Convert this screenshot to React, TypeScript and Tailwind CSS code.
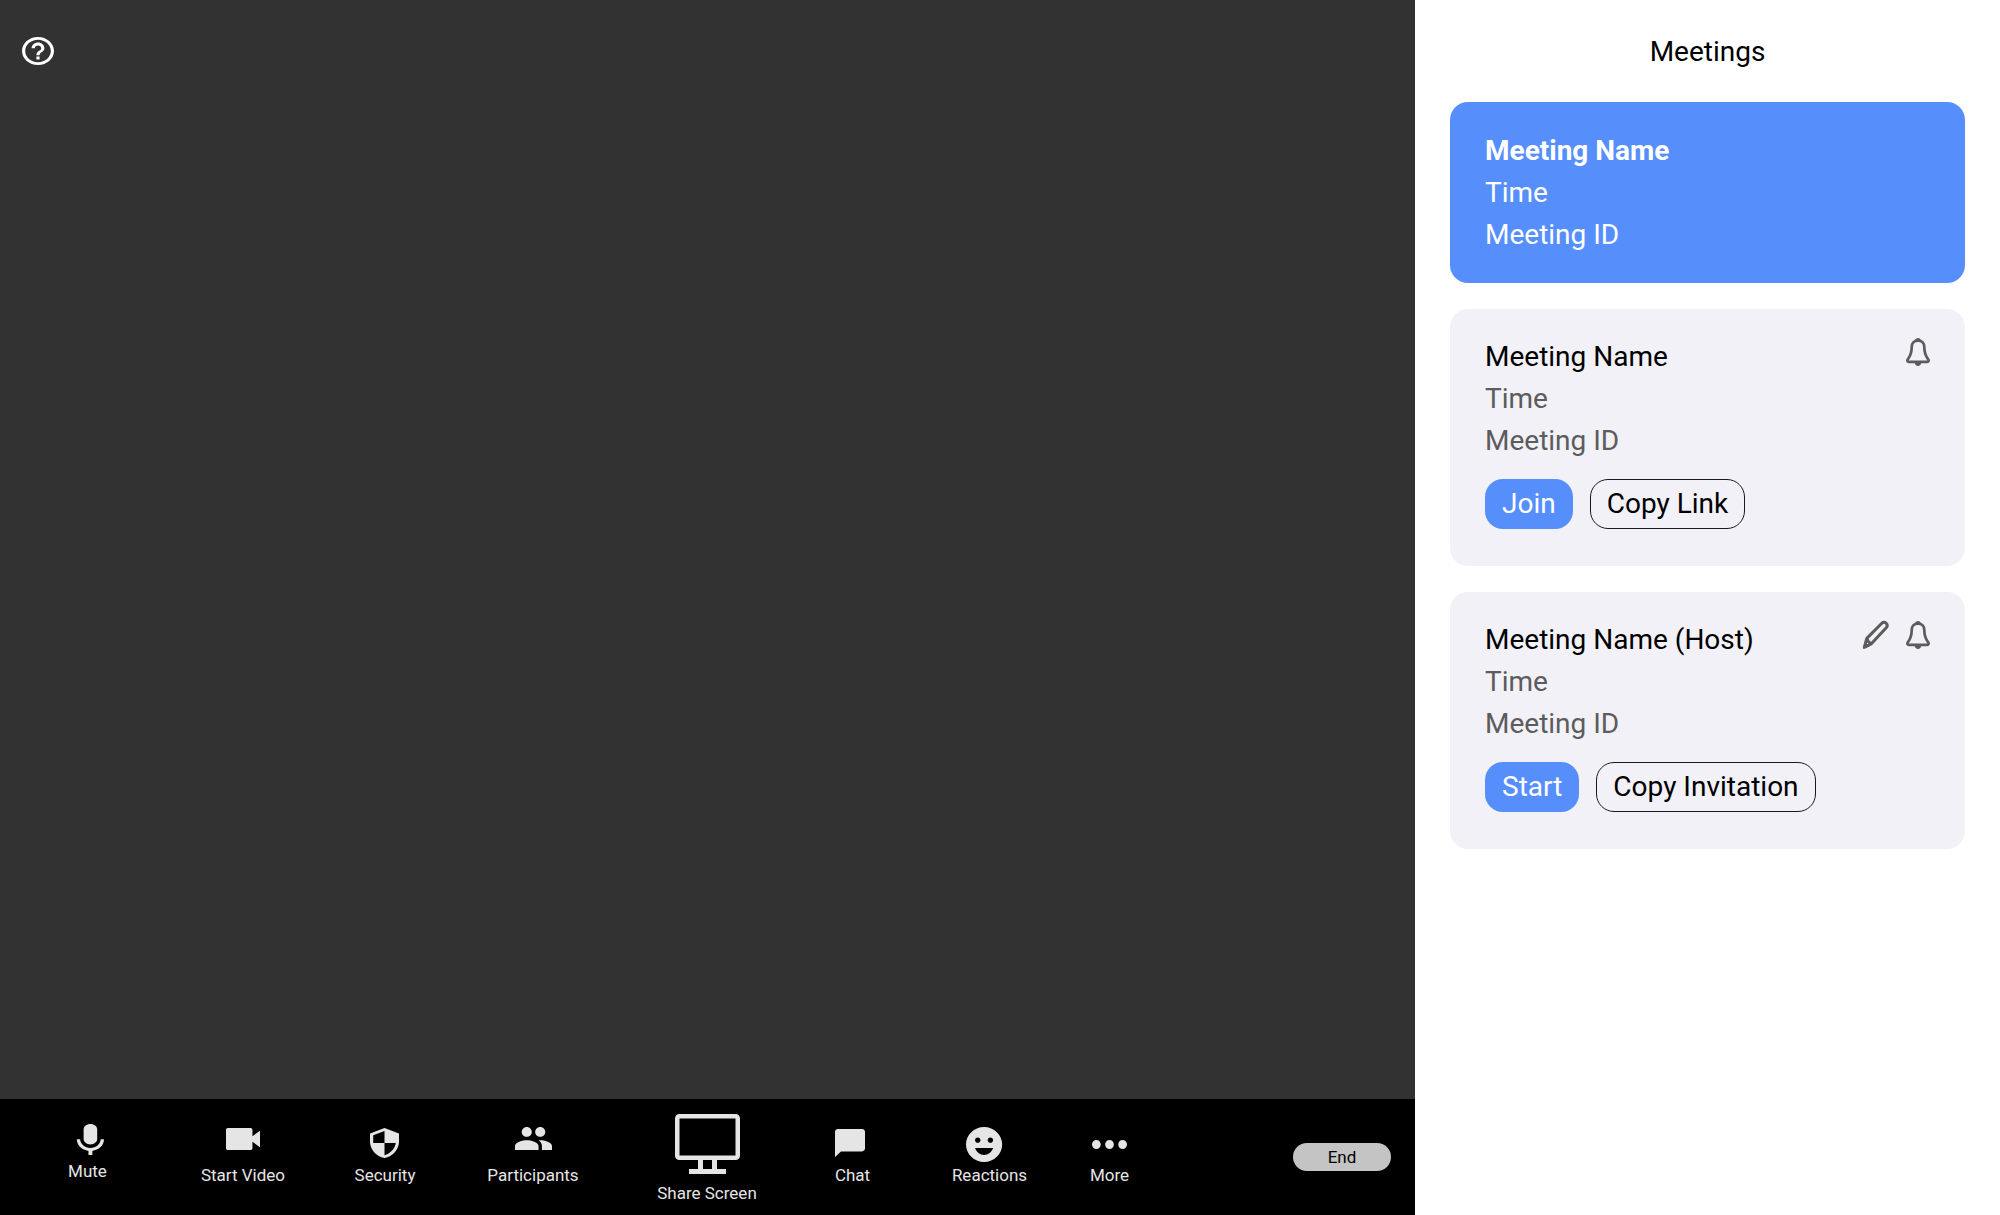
import type { ReactNode } from "react";

type GlyphProps = { box: string; size: string; d: string };

function Glyph({ box, size, d }: GlyphProps) {
  return (
    <svg viewBox={box} preserveAspectRatio="none" fill="currentColor" className={size} aria-hidden="true">
      <path d={d} />
    </svg>
  );
}

function MonitorIcon() {
  return (
    <svg viewBox="0 0 65 60" className="h-[60px] w-[65px]" fill="none" aria-hidden="true">
      <rect x="2.25" y="2.25" width="60.5" height="41.5" rx="2" stroke="currentColor" strokeWidth="4.5" />
      <path fill="currentColor" d="M23 46h5v9h9v-9h5v9h9v5H14v-5h9z" />
    </svg>
  );
}

function BellIcon() {
  return (
    <svg viewBox="0 0 26 30" className="h-[30px] w-[26px]" fill="none" stroke="currentColor" strokeWidth="2.7" strokeLinejoin="round" aria-hidden="true">
      <path d="M13 3.600C8.900 3.600 6.700 6.400 6.700 10c0 6-1.200 9-3.900 12.300-.8 1.300-.5 2.600 1 2.600h18.400c1.500 0 1.800-1.300 1-2.600C20.500 19 19.300 16 19.300 10c0-3.600-2.200-6.400-6.300-6.400z" />
      <path fill="currentColor" stroke="none" d="M10 3.600C10.300 1.900 11.400 1 13 1s2.700.9 3 2.600zM9.600 25.600h6.800c-.3 2.200-1.600 3.400-3.400 3.400s-3.100-1.200-3.400-3.400z" />
    </svg>
  );
}

function PencilIcon() {
  return (
    <svg viewBox="0 0 28 30" className="h-[30px] w-[28px]" fill="none" stroke="currentColor" strokeWidth="3" strokeLinejoin="round" aria-hidden="true">
      <path d="M5.800 18.400 20.800 3.300c1.300-1.300 3.200-1.300 4.400-.1 1.200 1.300 1.200 3.300 0 4.600L10.600 23.600l-7.300 3.700z" />
      <path d="M5.800 18.400c.6 2.600 2 4.400 4.800 5.200" />
      <path fill="currentColor" stroke="none" d="M3.900 22.500 2 28.800l6.500-2.500z" />
    </svg>
  );
}

type Tool = { label: string; place: string; icon: ReactNode };

const tools: Tool[] = [
  {
    label: "Mute",
    place: "items-center gap-1.5 pb-[34px]",
    icon: (
      <Glyph
        box="2 2 17 19"
        size="h-[31px] w-[33px]"
        d="M12 14.500c1.900 0 3.500-1.400 3.500-3.300V5.300C15.500 3.400 13.900 2 12 2S8.500 3.400 8.500 5.300v5.900c0 1.900 1.600 3.300 3.500 3.300zm5.300-3.500c0 3.300-2.500 5.700-5.300 5.700S6.700 14.300 6.700 11.400H5c0 3.800 2.700 6.600 6 7.100V21h2v-2.500c3.300-.5 6-3.300 6-7.100h-1.700z"
      />
    ),
  },
  {
    label: "Start Video",
    place: "items-center gap-[15px] pb-[30px]",
    icon: (
      <Glyph
        box="3 6 18 12"
        size="h-[22px] w-[34px]"
        d="M17 10.500V7c0-.55-.45-1-1-1H4c-.55 0-1 .45-1 1v10c0 .55.45 1 1 1h12c.55 0 1-.45 1-1v-3.500l4 3v-9l-4 3z"
      />
    ),
  },
  {
    label: "Security",
    place: "items-center gap-[7px] pb-[30px]",
    icon: (
      <Glyph
        box="3 1 18 22"
        size="h-[30px] w-[29px]"
        d="M12 1 3 5v6c0 5.550 3.840 10.740 9 12 5.160-1.260 9-6.450 9-12V5l-9-4zm0 10.990h7c-.53 4.120-3.280 7.790-7 8.940V12H5V6.300l7-3.110v8.800z"
      />
    ),
  },
  {
    label: "Participants",
    place: "items-center gap-[15px] pb-[30px]",
    icon: (
      <Glyph
        box="1 5 22 14"
        size="h-[23px] w-[37px]"
        d="M16 11c1.660 0 2.990-1.340 2.990-3S17.660 5 16 5c-1.660 0-3 1.340-3 3s1.340 3 3 3zm-8 0c1.660 0 2.990-1.340 2.990-3S9.660 5 8 5C6.340 5 5 6.340 5 8s1.340 3 3 3zm0 2c-2.330 0-7 1.170-7 3.500V19h14v-2.500c0-2.330-4.670-3.500-7-3.500zm8 0c-.29 0-.62.02-.97.05 1.160.84 1.970 1.970 1.970 3.450V19h6v-2.500c0-2.330-4.670-3.500-7-3.500z"
      />
    ),
  },
  { label: "Share Screen", place: "items-center gap-[9px] pb-3", icon: <MonitorIcon /> },
  {
    label: "Chat",
    place: "items-start gap-2 pb-[30px]",
    icon: (
      <Glyph
        box="2 2 20 20"
        size="h-7 w-[30px]"
        d="M20 2H4c-1.100 0-2 .9-2 2v18l4-4h14c1.100 0 2-.9 2-2V4c0-1.100-.9-2-2-2z"
      />
    ),
  },
  {
    label: "Reactions",
    place: "items-center gap-[3px] pb-[30px]",
    icon: (
      <Glyph
        box="2 2 26 20"
        size="h-[35px] w-[47px]"
        d="M12 2C6.480 2 2 6.480 2 12s4.480 10 10 10 10-4.480 10-10S17.520 2 12 2zM8.500 8c.83 0 1.500.67 1.500 1.500S9.330 11 8.500 11 7 10.330 7 9.500 7.670 8 8.500 8zM12 18c-2.280 0-4.220-1.660-5-4h10c-.78 2.340-2.720 4-5 4zm3.500-7c-.83 0-1.500-.67-1.500-1.500S14.670 8 15.500 8s1.500.67 1.500 1.500-.67 1.500-1.500 1.500z"
      />
    ),
  },
  {
    label: "More",
    place: "items-center gap-4 pb-[30px]",
    icon: (
      <Glyph
        box="4 10 16 4"
        size="h-[9px] w-[35px]"
        d="M6 10c-1.100 0-2 .9-2 2s.9 2 2 2 2-.9 2-2-.9-2-2-2zm12 0c-1.100 0-2 .9-2 2s.9 2 2 2 2-.9 2-2-.9-2-2-2zm-6 0c-1.100 0-2 .9-2 2s.9 2 2 2 2-.9 2-2-.9-2-2-2z"
      />
    ),
  },
];

type Meeting = { name: string; action: string; copy: string; host: boolean };

const meetings: Meeting[] = [
  { name: "Meeting Name", action: "Join", copy: "Copy Link", host: false },
  { name: "Meeting Name (Host)", action: "Start", copy: "Copy Invitation", host: true },
];

function MeetingCard({ name, action, copy, host }: Meeting) {
  return (
    <article className="flex items-start justify-between rounded-[18px] bg-[#f2f1f8] pt-[27px] pr-[34px] pb-[37px] pl-[35px]">
      <div>
        <h2>{name}</h2>
        <p className="text-[#5c5c5c]">Time</p>
        <p className="text-[#5c5c5c]">Meeting ID</p>
        <div className="mt-[17px] flex gap-[17px]">
          <button className="h-[50px] rounded-[18px] bg-[#568efc] px-[17px] text-white">{action}</button>
          <button className="h-[50px] rounded-[18px] border border-[#1a1a1a] px-4">{copy}</button>
        </div>
      </div>
      <div className="flex gap-4 pt-px text-[#5c5c5c]">
        {host && (
          <button aria-label="Edit meeting">
            <PencilIcon />
          </button>
        )}
        <button aria-label="Notifications">
          <BellIcon />
        </button>
      </div>
    </article>
  );
}

export default function App() {
  return (
    <div className="flex min-h-screen bg-white font-['Roboto',sans-serif]">
      <main className="flex min-w-0 flex-1 flex-col bg-[#323232]">
        <div className="flex-1 pt-[37px] pl-[22px]">
          <button aria-label="Help" className="block text-white">
            <Glyph
              box="2 2 20 20"
              size="h-7 w-8"
              d="M11 18h2v-2h-2v2zm1-16C6.480 2 2 6.480 2 12s4.480 10 10 10 10-4.480 10-10S17.520 2 12 2zm0 18c-4.410 0-8-3.590-8-8s3.590-8 8-8 8 3.590 8 8-3.590 8-8 8zm0-14c-2.210 0-4 1.790-4 4h2c0-1.100.9-2 2-2s2 .9 2 2c0 2-3 1.750-3 5h2c0-2.250 3-2.500 3-5 0-2.210-1.790-4-4-4z"
            />
          </button>
        </div>
        <footer className="grid min-h-[116px] grid-cols-[155fr_156fr_128fr_168fr_180fr_111fr_163fr_77fr_267fr] items-end bg-black pl-2.5 text-[#e5e5e5]">
          {tools.map((tool) => (
            <button
              key={tool.label}
              className={tool.place + " flex flex-col justify-self-center text-[17px] leading-5 whitespace-nowrap"}
            >
              {tool.icon}
              <span>{tool.label}</span>
            </button>
          ))}
          <button className="mr-6 h-7 w-[98px] self-center justify-self-end rounded-full bg-[#c4c4c4] text-[17px] leading-5 text-black">
            End
          </button>
        </footer>
      </main>
      <aside className="w-[585px] shrink-0 px-[35px] pt-[31px] text-[28px] leading-[42px] text-black">
        <h1 className="text-center">Meetings</h1>
        <div className="mt-[29px] flex flex-col gap-[26px]">
          <article className="rounded-[18px] bg-[#568efc] px-[35px] pt-7 pb-[27px] text-white">
            <h2 className="font-bold">Meeting Name</h2>
            <p>Time</p>
            <p>Meeting ID</p>
          </article>
          {meetings.map((meeting) => (
            <MeetingCard key={meeting.name} {...meeting} />
          ))}
        </div>
      </aside>
    </div>
  );
}
